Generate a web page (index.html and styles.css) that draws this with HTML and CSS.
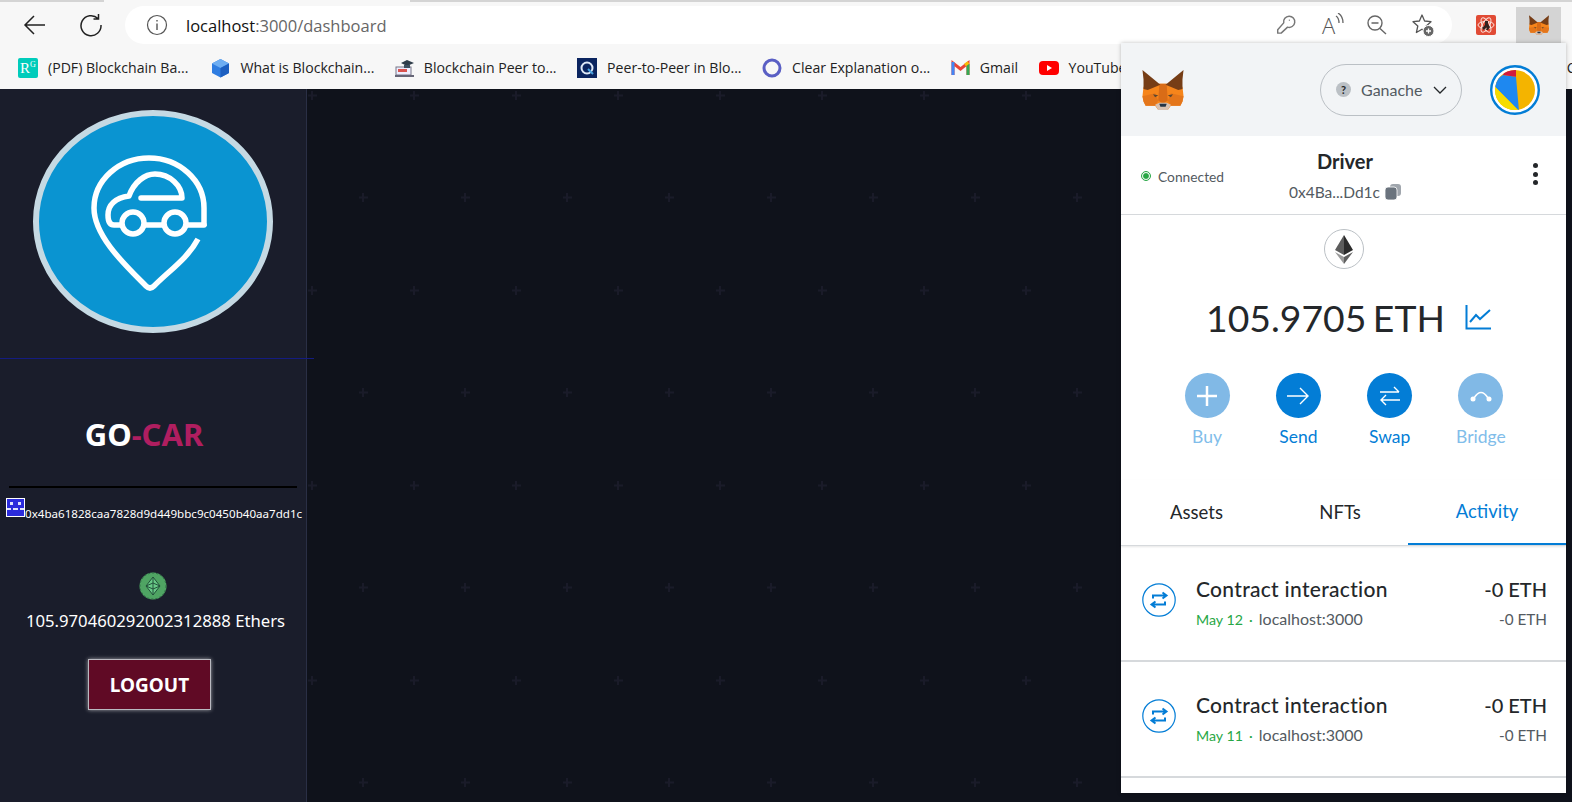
FILE: index.html
```html
<!DOCTYPE html>
<html>
<head>
	<title>Go-Car Dashboard</title>
	<link rel="stylesheet" href="styles.css">
</head>
<body>
	<svg class="defs" width="0" height="0">
		<symbol id="fox" viewBox="0 0 39 38">
			<polygon fill="#f6851b" points="1,16 16,13 23,13 38,16 39,25 38,30 36,34 27,34 24,38 15,38 12,34 3,34 1,30 0,25"/>
			<polygon fill="#e4761b" points="0,25 12,22 15,29 12,34 3,34 1,30"/>
			<polygon fill="#e4761b" points="39,25 27,22 24,29 27,34 36,34 38,30"/>
			<polygon fill="#d96c17" points="16,13 23,13 24,29 19.500,32 15,29"/>
			<polygon fill="#763d16" points="0,0 17,14 5,19 1,18 1,9"/>
			<polygon fill="#763d16" points="39,0 22,14 34,19 38,18 38,9"/>
			<polygon fill="#5b4630" points="10,23 15,24 12,26"/>
			<polygon fill="#5b4630" points="29,23 24,24 27,26"/>
			<polygon fill="#d7c1b3" points="12,33 16,31 23,31 27,33 24,38 15,38"/>
			<polygon fill="#233447" points="16,32 23,32 22,35 17,35"/>
		</symbol>
		<symbol id="swap-small" viewBox="0 0 34 34">
			<circle cx="17" cy="17" r="16.200" fill="none" stroke="#037dd6" stroke-width="1.200"/>
			<path d="M11 15.500V12.500H23M20.500 9.500L24.500 12.500L20.500 15.500M23 18.500V21.500H11M13.500 18.500L9.500 21.500L13.500 24.500" fill="none" stroke="#037dd6" stroke-width="2"/>
		</symbol>
	</svg>

	<div class="tabstrip">
		<div class="tabstrip-left"></div>
		<div class="tabstrip-mid"></div>
		<div class="tabstrip-right"></div>
	</div>

	<div class="toolbar">
		<svg class="nav-icon back" width="26" height="26" viewBox="0 0 26 26"><path d="M23 13H3M12 4L3 13L12 22" fill="none" stroke="#222" stroke-width="1.500"/></svg>
		<svg class="nav-icon reload" width="24" height="24" viewBox="0 0 24 24"><path d="M19 5.500A10 10 0 1 0 22 12M19.500 1V6H14.500" fill="none" stroke="#222" stroke-width="1.500"/></svg>
		<div class="address">
			<svg width="22" height="22" viewBox="0 0 22 22"><circle cx="11" cy="11" r="9.500" fill="none" stroke="#555" stroke-width="1.200"/><path d="M11 9.500V16M11 6V7.500" stroke="#555" stroke-width="1.400"/></svg>
			<span class="url"><b>localhost</b>:3000/dashboard</span>
			<div class="address-tools">
				<svg width="24" height="24" viewBox="-2 -2 28 28"><path d="M10.500 9.500A6.500 6.500 0 1 1 15 14.500L7.500 21.500H3.500V17.500ZM16.500 6.500H17.500" fill="none" stroke="#777" stroke-width="1.700" stroke-linejoin="round"/></svg>
				<span class="read-aloud">A<svg width="9" height="14" viewBox="0 0 9 14"><path d="M1 3Q4 5 4 10M3 0Q8 3 8 10" fill="none" stroke="#666" stroke-width="1.300"/></svg></span>
				<svg width="24" height="24" viewBox="0 0 24 24"><circle cx="10" cy="10" r="7" fill="none" stroke="#666" stroke-width="1.400"/><path d="M6.500 10H13.500M15 15.500L21 21" stroke="#666" stroke-width="1.400"/></svg>
				<svg width="24" height="24" viewBox="0 0 24 24"><polygon points="11,2 13.600,8 20,8.700 15.200,13 16.600,19.500 11,16.200 5.400,19.500 6.800,13 2,8.700 8.400,8" fill="none" stroke="#555" stroke-width="1.300" stroke-linejoin="round"/><circle cx="17.500" cy="18" r="5.500" fill="#666" stroke="#fff"/><path d="M15 18H20M17.500 15.500V20.500" stroke="#fff" stroke-width="1.300"/></svg>
			</div>
		</div>
		<div class="extensions">
			<div class="ext-red">
				<svg width="20" height="20" viewBox="0 0 20 20"><g fill="none" stroke="#fbe3dc" stroke-width="1"><ellipse cx="10" cy="10" rx="8" ry="3.500"/><ellipse cx="10" cy="10" rx="8" ry="3.500" transform="rotate(60 10 10)"/><ellipse cx="10" cy="10" rx="8" ry="3.500" transform="rotate(120 10 10)"/></g><path d="M9 6H12V9L14 12L12 15H10L11 12L8 15L6 13L9 10Z" fill="#33221f"/></svg>
			</div>
			<div class="ext-active"><svg width="20" height="20"><use href="#fox"/></svg></div>
		</div>
	</div>

	<div class="bookmarks">
		<div class="bookmark bookmark-first"><span class="bm-rg">R<sup>G</sup></span><span>(PDF) Blockchain Ba...</span></div>
		<div class="bookmark"><svg width="19" height="20" viewBox="0 0 19 20"><polygon points="9.500,1 18,5.500 18,15 9.500,19.500 1,15 1,5.500" fill="#2f7de1"/><polygon points="9.500,1 18,5.500 9.500,10 1,5.500" fill="#6eaef2"/><polygon points="9.500,10 18,5.500 18,15 9.500,19.500" fill="#1d5fc0"/></svg><span>What is Blockchain...</span></div>
		<div class="bookmark"><svg width="19" height="20" viewBox="0 0 19 20"><rect x="1" y="9" width="15" height="8" fill="#eef" stroke="#778" stroke-width="1"/><rect x="3" y="11" width="9" height="3" fill="#d9534f"/><rect y="17" width="19" height="2" fill="#667"/><polygon points="12,2 19,5 12,8 6,5" fill="#2f3d4a"/><path d="M9 7V10H15V7" fill="#3d4f5f"/></svg><span>Blockchain Peer to...</span></div>
		<div class="bookmark"><svg width="20" height="20" viewBox="0 0 20 20"><rect width="20" height="20" fill="#0b2560"/><circle cx="10" cy="10" r="5.500" fill="none" stroke="#dfe9f7" stroke-width="2"/><path d="M11 11L16 16" stroke="#4aa3e0" stroke-width="2"/></svg><span>Peer-to-Peer in Blo...</span></div>
		<div class="bookmark"><svg width="20" height="20" viewBox="0 0 20 20"><circle cx="10" cy="10" r="8" fill="none" stroke="#5a5fc4" stroke-width="3"/></svg><span>Clear Explanation o...</span></div>
		<div class="bookmark"><svg width="19" height="20" viewBox="0 0 19 20"><path d="M2 17V5L9.500 11L17 5V17" fill="none" stroke="#ea4335" stroke-width="3"/><path d="M2 4V17" stroke="#4285f4" stroke-width="3"/><path d="M17 6V17" stroke="#34a853" stroke-width="3"/><path d="M14 7L17.500 4.500" stroke="#fbbc04" stroke-width="3"/></svg><span>Gmail</span></div>
		<div class="bookmark"><svg width="20" height="20" viewBox="0 0 20 20"><rect y="3" width="20" height="14" rx="4" fill="#f00"/><polygon points="8,7 8,13 13,10" fill="#fff"/></svg><span>YouTube</span></div>
		<div class="bookmark bookmark-end"><span>Co</span></div>
	</div>

	<div class="app">
		<aside class="sidebar">
			<svg class="logo" width="240" height="223" viewBox="33 110 240 223">
				<ellipse cx="153" cy="221.500" rx="117" ry="108.500" fill="#0a94d1" stroke="#c5d9e3" stroke-width="6"/>
				<g fill="none" stroke="#fff" stroke-width="5.500" stroke-linecap="round" stroke-linejoin="round">
					<path d="M204 226V208A55 50 0 0 0 94 208C94 236 125 265 146 286Q150 290 154 286C170 270 188 258 198 239" stroke-linecap="butt"/>
					<path d="M204 225H187M163 225H145M121 225H114Q108 225 108 215C108 205 115 198 129 196C134 182 145 174 155 174C170 174 182 186 182 198H141"/>
					<circle cx="133" cy="223" r="11"/>
					<circle cx="175" cy="223" r="11"/>
				</g>
			</svg>
			<div class="sidebar-rule"></div>
			<h1 class="brand">GO<span>-CAR</span></h1>
			<hr class="brand-rule">
			<div class="wallet">
				<svg class="identicon" width="19" height="19" viewBox="0 0 19 19"><rect width="19" height="19" fill="#fff"/><rect x="1" y="1" width="17" height="17" fill="#2b2bdc"/><path d="M4 4H7V7H4ZM12 4H15V7H12ZM1 10H5V12H1ZM7 10H12V12H7ZM14 10H18V12H14Z" fill="#dfe3fb"/></svg>
				<span>0x4ba61828caa7828d9d449bbc9c0450b40aa7dd1c</span>
			</div>
			<svg class="eth-badge" width="28" height="28" viewBox="0 0 28 28"><circle cx="14" cy="14" r="13.500" fill="#4fa463"/><circle cx="14" cy="14" r="13" fill="none" stroke="#2f6b45" stroke-dasharray="2 2"/><path d="M14 5L21 14L14 23L7 14ZM7 14L14 11L21 14L14 17Z M14 5V23" fill="#68c987" stroke="#23513a" stroke-width="1"/></svg>
			<div class="ether-amount">105.970460292002312888 Ethers</div>
			<button class="logout">LOGOUT</button>
		</aside>
		<main class="canvas"></main>
	</div>

	<section class="wallet-popup">
		<header class="mm-header">
			<svg class="mm-fox" width="42" height="40"><use href="#fox"/></svg>
			<div class="network">
				<span class="network-dot">?</span>
				<span>Ganache</span>
				<svg width="14" height="8" viewBox="0 0 14 8"><path d="M1 1L7 7L13 1" fill="none" stroke="#24272a" stroke-width="1.300"/></svg>
			</div>
			<svg class="avatar" width="50" height="50" viewBox="0 0 50 50">
				<defs><clipPath id="pie"><circle cx="25" cy="25" r="20"/></clipPath></defs>
				<circle cx="25" cy="25" r="23.800" fill="#fff" stroke="#037dd6" stroke-width="2.400"/>
				<g clip-path="url(#pie)">
					<rect width="50" height="50" fill="#f4b400"/>
					<polygon points="0,18 13,10 26,11.700 29,46 5,21.700" fill="#1e88f0"/>
					<polygon points="0,16 5,21.700 29,46 0,50" fill="#f5dc00"/>
					<polygon points="13,10 18,0 26,0 26,11.700" fill="#d0193f"/>
				</g>
			</svg>
		</header>

		<div class="account-row">
			<div class="connected"><span class="connected-dot"></span>Connected</div>
			<div class="account-name">
				<strong>Driver</strong>
				<div class="account-address">0x4Ba...Dd1c
					<svg width="16" height="16" viewBox="0 0 16 16"><rect x="5" y="0" width="11" height="12" rx="3" fill="#a0a6ad"/><rect x="0" y="3" width="12" height="13" rx="3" fill="#6a737d" stroke="#fff" stroke-width="0.800"/></svg>
				</div>
			</div>
			<div class="kebab"><i></i><i></i><i></i></div>
		</div>

		<div class="balance">
			<svg class="eth-logo" width="40" height="40" viewBox="0 0 40 40">
				<circle cx="20" cy="20" r="19.500" fill="#fff" stroke="#bbc0c5"/>
				<polygon points="20,6 11,21 20,26" fill="#5c5c5c"/>
				<polygon points="20,6 29,21 20,26" fill="#2b2b2b"/>
				<polygon points="11,23 20,35 20,28" fill="#9a9a9a"/>
				<polygon points="29,23 20,35 20,28" fill="#5f5f5f"/>
			</svg>
			<div class="balance-line">
				<span>105.9705 ETH</span>
				<svg width="26" height="26" viewBox="0 0 26 26"><path d="M1.500 1V24.500H26M5 18L11 11L15 15L25 6" fill="none" stroke="#037dd6" stroke-width="2"/></svg>
			</div>
			<div class="actions">
				<div class="action off">
					<span class="action-circle"><svg width="22" height="22" viewBox="0 0 22 22"><path d="M11 1V21M1 11H21" stroke="#fff" stroke-width="2.500"/></svg></span>Buy
				</div>
				<div class="action">
					<span class="action-circle"><svg width="22" height="18" viewBox="0 0 22 18"><path d="M0 9H21M13 1L21 9L13 17" fill="none" stroke="#fff" stroke-width="1.400"/></svg></span>Send
				</div>
				<div class="action">
					<span class="action-circle"><svg width="22" height="22" viewBox="0 0 22 22"><path d="M1 7H20M15 2L20 7M21 15H2M7 10L2 15L7 20" fill="none" stroke="#fff" stroke-width="1.400"/></svg></span>Swap
				</div>
				<div class="action off">
					<span class="action-circle"><svg width="22" height="12" viewBox="0 0 22 12"><path d="M4 8Q11 -3 18 8" fill="none" stroke="#fff" stroke-width="1.600"/><circle cx="3" cy="9" r="2.500" fill="#fff"/><circle cx="19" cy="9" r="2.500" fill="#fff"/></svg></span>Bridge
				</div>
			</div>
		</div>

		<nav class="tabs">
			<div class="tab">Assets</div>
			<div class="tab">NFTs</div>
			<div class="tab tab-active">Activity</div>
		</nav>

		<div class="activity">
			<div class="activity-item">
				<svg width="34" height="34"><use href="#swap-small"/></svg>
				<div class="activity-main">
					<div class="activity-title">Contract interaction</div>
					<div class="activity-sub"><span class="date">May 12</span> <span class="date">·</span> localhost:3000</div>
				</div>
				<div class="activity-amount">
					<div class="activity-title">-0 ETH</div>
					<div class="activity-sub">-0 ETH</div>
				</div>
			</div>
			<div class="activity-item">
				<svg width="34" height="34"><use href="#swap-small"/></svg>
				<div class="activity-main">
					<div class="activity-title">Contract interaction</div>
					<div class="activity-sub"><span class="date">May 11</span> <span class="date">·</span> localhost:3000</div>
				</div>
				<div class="activity-amount">
					<div class="activity-title">-0 ETH</div>
					<div class="activity-sub">-0 ETH</div>
				</div>
			</div>
		</div>
	</section>
</body>
</html>
```

FILE: styles.css
```css
html, body {
	margin: 0;
	padding: 0;
	height: 100%;
	overflow: hidden;
}

body {
	display: flex;
	flex-direction: column;
	background-color: #f7f7f7;
	font-family: "Open Sans", sans-serif;
}

.defs {
	position: absolute;
}

/* browser chrome */

.tabstrip {
	display: flex;
	height: 2px;
	flex-shrink: 0;
}

.tabstrip-left {
	width: 104px;
	background-color: #d4d4d4;
}

.tabstrip-mid {
	width: 306px;
	background-color: #f7f7f7;
}

.tabstrip-right {
	flex: 1;
	background-color: #d4d4d4;
}

.toolbar {
	display: flex;
	align-items: center;
	height: 42px;
	padding-top: 2px;
	flex-shrink: 0;
}

.back {
	margin-left: 22px;
}

.reload {
	margin-left: 31px;
}

.address {
	display: flex;
	align-items: center;
	width: 1327px;
	height: 38px;
	margin-left: 22px;
	padding-left: 21px;
	box-sizing: border-box;
	background-color: #fff;
	border-radius: 19px;
}

.url {
	margin-left: 18px;
	font-size: 16.500px;
	color: #666;
}

.url b {
	font-weight: 400;
	color: #111;
}

.address-tools {
	display: flex;
	align-items: center;
	gap: 22px;
	margin-left: auto;
	padding-right: 17px;
}

.read-aloud {
	display: flex;
	align-items: flex-start;
	justify-content: center;
	width: 24px;
	margin-left: 2px;
	margin-right: -2px;
	font-size: 22px;
	font-weight: 300;
	line-height: 24px;
	color: #555;
}

.extensions {
	display: flex;
	align-items: center;
	margin-left: 24px;
}

.ext-red {
	display: flex;
	align-items: center;
	justify-content: center;
	width: 20px;
	height: 20px;
	background-color: #e14b35;
	border-radius: 2px;
}

.ext-active {
	display: flex;
	align-items: center;
	justify-content: center;
	width: 45px;
	height: 37px;
	margin-left: 20px;
	background-color: #d4d4d4;
}

.bookmarks {
	display: flex;
	align-items: center;
	height: 43px;
	padding-left: 18px;
	gap: 20.500px;
	flex-shrink: 0;
	overflow: hidden;
	box-sizing: border-box;
	font-size: 14.100px;
	color: #222;
}

.bookmark {
	display: flex;
	align-items: center;
	gap: 10px;
	white-space: nowrap;
}

.bookmark-first {
	margin-right: 2.500px;
}

.bookmark-end {
	margin-left: auto;
	margin-right: -12px;
}

.bm-rg {
	display: block;
	width: 20px;
	height: 20px;
	background-color: #00ccbb;
	border-radius: 2px;
	color: #fff;
	font-family: "Liberation Serif", serif;
	font-size: 15px;
	line-height: 21px;
	text-align: center;
}

.bm-rg sup {
	font-size: 8px;
	line-height: 0;
}

/* dashboard */

.app {
	display: flex;
	flex: 1;
	min-height: 0;
}

.sidebar {
	position: relative;
	z-index: 1;
	display: flex;
	flex-direction: column;
	align-items: center;
	width: 306px;
	flex-shrink: 0;
	background-color: #1a1d2b;
	color: #fff;
	border-right: 1px solid #2a2f45;
	font-family: "Noto Sans", sans-serif;
}

.logo {
	margin-top: 21px;
	flex-shrink: 0;
}

.sidebar-rule {
	align-self: flex-start;
	width: 314px;
	height: 1px;
	margin-top: 25px;
	background-color: #141c80;
	flex-shrink: 0;
}

.brand {
	margin: 53px 18px 0 0;
	font-size: 31px;
	line-height: 44px;
	font-weight: 700;
}

.brand span {
	color: #b01e60;
}

.brand-rule {
	width: 288px;
	height: 2px;
	margin: 30px 0 0;
	border: none;
	background-color: #000;
}

.wallet {
	display: flex;
	align-items: flex-end;
	align-self: flex-start;
	margin: 10px 0 0 6px;
	font-size: 11.600px;
	line-height: 14px;
	white-space: nowrap;
}

.wallet span {
	margin-bottom: -4px;
}

.eth-badge {
	margin-top: 55px;
}

.ether-amount {
	margin: 9px 0 0 5px;
	font-size: 16.700px;
	line-height: 24px;
}

.logout {
	width: 123px;
	height: 51px;
	margin: 26px 7px 0 0;
	background-color: #600a25;
	border: 1px solid #b9b9c0;
	box-shadow: 0 0 4px rgba(255, 255, 255, 0.6);
	color: #fff;
	font-family: "Noto Sans", sans-serif;
	font-size: 19px;
	font-weight: 700;
}

.canvas {
	flex: 1;
	background-color: #0f121b;
	background-position: 0 1px;
	background-image: url("data:image/svg+xml,%3Csvg xmlns='http://www.w3.org/2000/svg' width='102' height='195'%3E%3Cpath d='M5 1v9M1 5.500h9M56 103v9M52 107.500h9' stroke='%231a1b29' stroke-width='2' fill='none'/%3E%3C/svg%3E");
}

/* wallet popup, floats over the page */

.wallet-popup {
	position: absolute;
	top: 43px;
	right: 6px;
	display: flex;
	flex-direction: column;
	width: 445px;
	height: 750px;
	background-color: #fff;
	box-shadow: 0 0 4px rgba(0, 0, 0, 0.25);
	font-family: "Lato", sans-serif;
	color: #24272a;
	z-index: 2;
}

.mm-header {
	display: flex;
	align-items: center;
	height: 93px;
	flex-shrink: 0;
	padding: 0 26px 0 21px;
	background-color: #f2f4f6;
}

.network {
	display: flex;
	align-items: center;
	gap: 10px;
	height: 52px;
	margin-left: auto;
	padding: 0 11px 0 15px;
	box-sizing: border-box;
	width: 142px;
	border: 1px solid #bbc0c5;
	border-radius: 26px;
	font-size: 16px;
	color: #535a61;
}

.network-dot {
	display: flex;
	align-items: center;
	justify-content: center;
	width: 15px;
	height: 15px;
	background-color: #bbc0c5;
	border-radius: 50%;
	font-size: 11px;
	font-weight: 700;
	color: #24272a;
}

.avatar {
	margin-left: 28px;
}

.account-row {
	display: grid;
	grid-template-columns: 1fr auto 1fr;
	align-items: center;
	height: 79px;
	flex-shrink: 0;
	padding: 0 28px 0 21px;
	box-sizing: border-box;
	border-bottom: 1px solid #d6d9dc;
}

.connected {
	display: flex;
	align-items: center;
	gap: 8px;
	margin-top: 2px;
	font-size: 13.800px;
	color: #535a61;
}

.connected-dot {
	width: 6px;
	height: 6px;
	background-color: #28a745;
	border: 1.500px solid #fff;
	outline: 1px solid #28a745;
	border-radius: 50%;
}

.account-name {
	text-align: center;
	padding: 2px 0 0 10px;
}

.account-name strong {
	display: block;
	margin-top: -4px;
	font-size: 20px;
	font-weight: 700;
	line-height: 26px;
}

.account-address {
	display: flex;
	align-items: center;
	gap: 5px;
	margin-top: 9px;
	font-size: 15.500px;
	color: #535a61;
}

.kebab {
	display: flex;
	flex-direction: column;
	align-items: flex-end;
	gap: 3.500px;
	margin-bottom: 2px;
}

.kebab i {
	width: 5px;
	height: 5px;
	background-color: #24272a;
	border-radius: 50%;
}

.balance {
	display: flex;
	flex-direction: column;
	align-items: center;
	height: 265px;
	flex-shrink: 0;
}

.eth-logo {
	margin-top: 14px;
}

.balance-line {
	display: flex;
	align-items: center;
	gap: 20px;
	height: 50px;
	margin: 23px 0 0 10px;
	font-size: 37.300px;
	word-spacing: -3px;
}

.actions {
	display: flex;
	margin: 31px 0 0 1px;
}

.action {
	display: flex;
	flex-direction: column;
	align-items: center;
	width: 91.300px;
	font-size: 17.500px;
	line-height: 20px;
	color: #037dd6;
}

.action-circle {
	display: flex;
	align-items: center;
	justify-content: center;
	width: 45px;
	height: 45px;
	margin-bottom: 9px;
	background-color: #037dd6;
	border-radius: 50%;
}

.action.off {
	color: #81bdea;
}

.action.off .action-circle {
	background-color: #81b9e6;
}

.tabs {
	display: grid;
	grid-template-columns: 151px 136px 158px;
	height: 66px;
	flex-shrink: 0;
	box-sizing: border-box;
	border-bottom: 1px solid #d6d9dc;
	box-shadow: 0 1px 2px rgba(0, 0, 0, 0.1);
	font-size: 18.500px;
	color: #24272a;
}

.tab {
	display: flex;
	align-items: center;
	justify-content: center;
	padding-bottom: 2px;
}

.tab-active {
	color: #037dd6;
	border-bottom: 2px solid #037dd6;
}

.activity-item {
	display: flex;
	align-items: flex-start;
	height: 116px;
	padding: 37px 19px 0 21px;
	box-sizing: border-box;
	border-bottom: 2px solid #d6d9dc;
}

.activity-main {
	flex: 1;
	margin-left: 20px;
	margin-top: -8px;
}

.activity-amount {
	margin-top: -8px;
	text-align: right;
}

.activity-title {
	font-size: 21px;
	letter-spacing: 0.300px;
	line-height: 28px;
	font-weight: 500;
}

.activity-amount .activity-title {
	font-size: 20px;
	letter-spacing: 0;
}

.activity-sub {
	margin-top: 4px;
	font-size: 16px;
	line-height: 24px;
	color: #535a61;
}

.activity-amount .activity-sub {
	font-size: 15.300px;
}

.date {
	margin-right: 2px;
	font-size: 14.200px;
	color: #28a745;
}
```
